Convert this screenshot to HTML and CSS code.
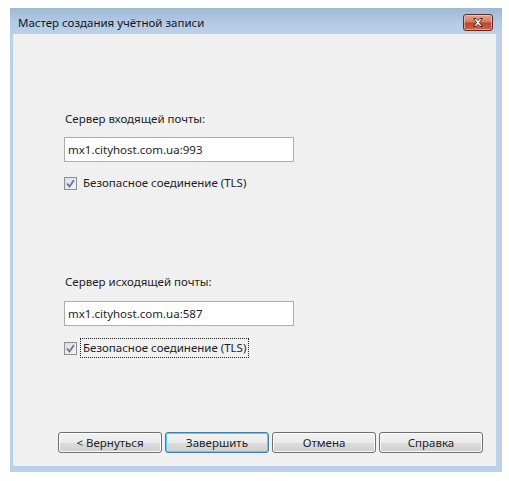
FILE: index.html
```html
<!DOCTYPE html>
<html lang="ru">
<head>
<meta charset="utf-8">
<title>Мастер создания учётной записи</title>
<link rel="stylesheet" href="styles.css">
</head>
<body>
<div class="window">
  <div class="titlebar">
    <span class="title">Мастер создания учётной записи</span>
    <button class="close" aria-label="Закрыть">
      <svg width="30" height="17" viewBox="0 0 30 17">
        <path d="M10.5 4.5 L13 4.5 L15 6.6 L17 4.5 L19.5 4.5 L16.4 8.5 L19.5 12.5 L17 12.5 L15 10.4 L13 12.5 L10.5 12.5 L13.6 8.5 Z" fill="#fff" stroke="#5a2a24" stroke-width="1" stroke-linejoin="round"/>
      </svg>
    </button>
  </div>
  <div class="client">
    <section class="group group-in">
      <label class="caption" for="in-server">Сервер входящей почты:</label>
      <input class="field" id="in-server" type="text" value="mx1.cityhost.com.ua:993">
      <div class="check">
        <span class="box"><svg width="13" height="13" viewBox="0 0 13 13"><path d="M3 6.5 L5.5 9.5 L10 3" fill="none" stroke="#5b77a8" stroke-width="1.8"/></svg></span>
        <span class="check-text">Безопасное соединение (TLS)</span>
      </div>
    </section>
    <section class="group group-out">
      <label class="caption" for="out-server">Сервер исходящей почты:</label>
      <input class="field" id="out-server" type="text" value="mx1.cityhost.com.ua:587">
      <div class="check">
        <span class="box"><svg width="13" height="13" viewBox="0 0 13 13"><path d="M3 6.5 L5.5 9.5 L10 3" fill="none" stroke="#5b77a8" stroke-width="1.8"/></svg></span>
        <span class="check-text focused">Безопасное соединение (TLS)</span>
      </div>
    </section>
    <div class="buttons">
      <button class="btn">&lt; Вернуться</button>
      <button class="btn default">Завершить</button>
      <button class="btn">Отмена</button>
      <button class="btn">Справка</button>
    </div>
  </div>
</div>
</body>
</html>
```

FILE: styles.css
```css
* { box-sizing: border-box; }

body {
  margin: 0;
  background: #ffffff;
  font-family: "Noto Sans", "Open Sans", sans-serif;
  font-size: 11.5px;
  color: #1e1e1e;
}

.window {
  margin: 8px 0 0 10px;
  width: 492px;
  height: 464px;
  background: #b9d1ea;
  border-left: 3px solid #b9d1ea;
  border-right: 6px solid #b9d1ea;
  border-bottom: 6px solid #b9d1ea;
  display: flex;
  flex-direction: column;
}

.titlebar {
  height: 26px;
  margin: 0 -6px 0 -3px;
  padding: 0 9px 0 8px;
  background: linear-gradient(#9fb8d4, #b3cbe5 60%, #b9d1ea);
  display: flex;
  align-items: flex-start;
  justify-content: space-between;
}

.title {
  font-size: 11.5px;
  line-height: 16px;
  padding-top: 7px;
  color: #151515;
}

.close {
  margin-top: 6px;
  width: 30px;
  height: 17px;
  padding: 0;
  border: 1px solid #5c2b2b;
  border-radius: 3px;
  background: linear-gradient(#e8a493, #d67a63 45%, #c1432c 55%, #d5634a);
  box-shadow: inset 0 0 0 1px rgba(255, 220, 210, 0.5);
  display: flex;
  align-items: center;
  justify-content: center;
}
.close svg { display: block; margin: -1px; }

.client {
  flex: 1;
  background: #f0f0f0;
  padding: 77px 13px 13px 45px;
  display: flex;
  flex-direction: column;
}

.group {
  display: flex;
  flex-direction: column;
  align-items: flex-start;
  padding-left: 6px;
}
.group-out { margin-top: 82px; }

.caption {
  line-height: 16px;
  height: 16px;
  padding-left: 1px;
}

.field {
  margin-top: 10px;
  width: 230px;
  height: 25px;
  border: 1px solid #abadb3;
  background: #ffffff;
  font: inherit;
  color: #1e1e1e;
  padding: 0 3px 1px;
  outline: none;
}
.group-out .field { margin-top: 11px; }

.check {
  margin-top: 12px;
  display: flex;
  align-items: center;
  gap: 3px;
  height: 18px;
}
.group-out .check { margin-top: 13px; }

.box {
  width: 13px;
  height: 13px;
  border: 1px solid #8f8f8f;
  background: linear-gradient(135deg, #dcdcdc, #f6f6f6);
  display: flex;
  position: relative;
}
.box svg { position: absolute; left: -1px; top: -1px; }

.check-text {
  line-height: 16px;
  padding: 1px 2px;
  border: 1px dotted transparent;
}
.check-text.focused { border-color: #222; }

.buttons {
  margin-top: auto;
  display: flex;
  justify-content: flex-end;
  gap: 3px;
}

.btn {
  flex: none;
  width: 104px;
  height: 21px;
  border: 1px solid #707070;
  border-radius: 3px;
  background: linear-gradient(#f2f2f2, #ebebeb 50%, #dddddd 50%, #cfcfcf);
  box-shadow: inset 0 0 0 1px #fcfcfc;
  font: inherit;
  color: #1e1e1e;
  padding: 0 0 1px;
}
.btn.default {
  border-color: #3c7fb1;
  box-shadow: inset 0 0 0 1px #48d7fb;
}
```
